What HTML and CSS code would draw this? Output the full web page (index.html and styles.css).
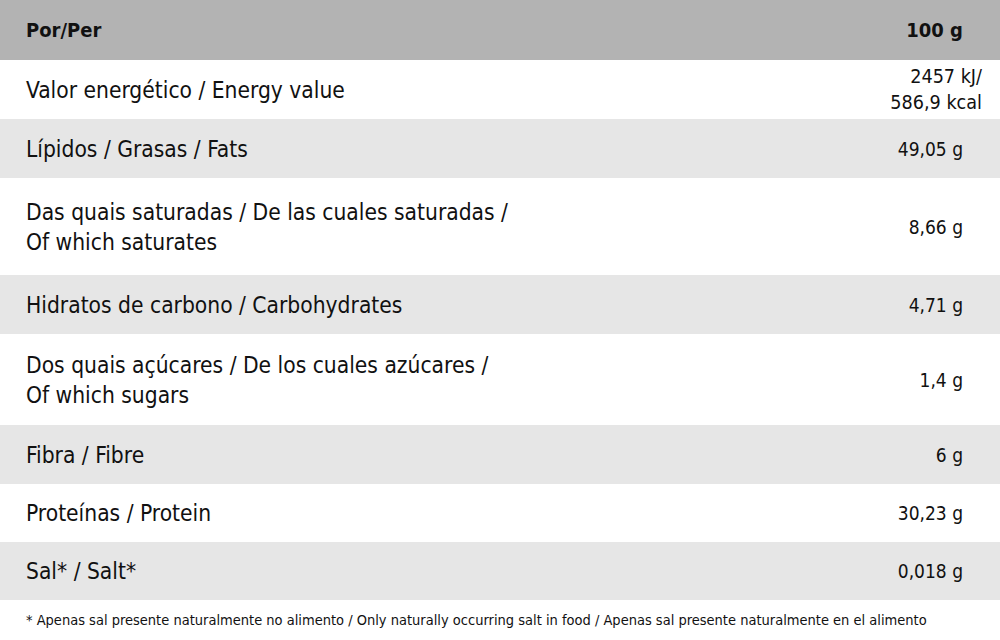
FILE: index.html
```html
<!DOCTYPE html>
<html>
<head>
<meta charset="utf-8">
<link rel="stylesheet" href="styles.css">
</head>
<body>
<div class="table">
  <div class="row head"><div class="label">Por/Per</div><div class="val">100 g</div></div>
  <div class="row w h59"><div class="label">Valor energético / Energy value</div><div class="val two">2457 kJ/<br>586,9 kcal</div></div>
  <div class="row g h59"><div class="label">Lípidos / Grasas / Fats</div><div class="val">49,05 g</div></div>
  <div class="row w h97"><div class="label">Das quais saturadas / De las cuales saturadas /<br>Of which saturates</div><div class="val">8,66 g</div></div>
  <div class="row g h59"><div class="label">Hidratos de carbono / Carbohydrates</div><div class="val">4,71 g</div></div>
  <div class="row w h91"><div class="label">Dos quais açúcares / De los cuales azúcares /<br>Of which sugars</div><div class="val">1,4 g</div></div>
  <div class="row g h59"><div class="label">Fibra / Fibre</div><div class="val">6 g</div></div>
  <div class="row w h58"><div class="label">Proteínas / Protein</div><div class="val">30,23 g</div></div>
  <div class="row g h58"><div class="label">Sal* / Salt*</div><div class="val">0,018 g</div></div>
</div>
<p class="note">* Apenas sal presente naturalmente no alimento / Only naturally occurring salt in food / Apenas sal presente naturalmente en el alimento</p>
</body>
</html>
```
FILE: styles.css
```css
html, body { margin: 0; padding: 0; background: #fff; }
body { width: 1000px; height: 640px; overflow: hidden; font-family: "DejaVu Sans", sans-serif; font-stretch: condensed; color: #111; }
.table { display: flex; flex-direction: column; }
.row { display: flex; align-items: center; justify-content: space-between; padding: 0 37px 0 26px; box-sizing: border-box; font-size: 22.6px; line-height: 30px; }
.head { height: 60px; background: #b3b3b3; font-weight: bold; font-size: 20px; }
.w { background: #fff; }
.g { background: #e6e6e6; }
.h59 { height: 59px; }
.h58 { height: 58px; }
.h97 { height: 97px; }
.h91 { height: 91px; }
.val { text-align: right; font-size: 19px; }
.val.two { line-height: 26px; margin-right: -19px; font-size: 19.6px; }
.head .val { font-size: 20px; }
.note { margin: 12px 0 0 26px; font-size: 14.5px; white-space: nowrap; }
```
